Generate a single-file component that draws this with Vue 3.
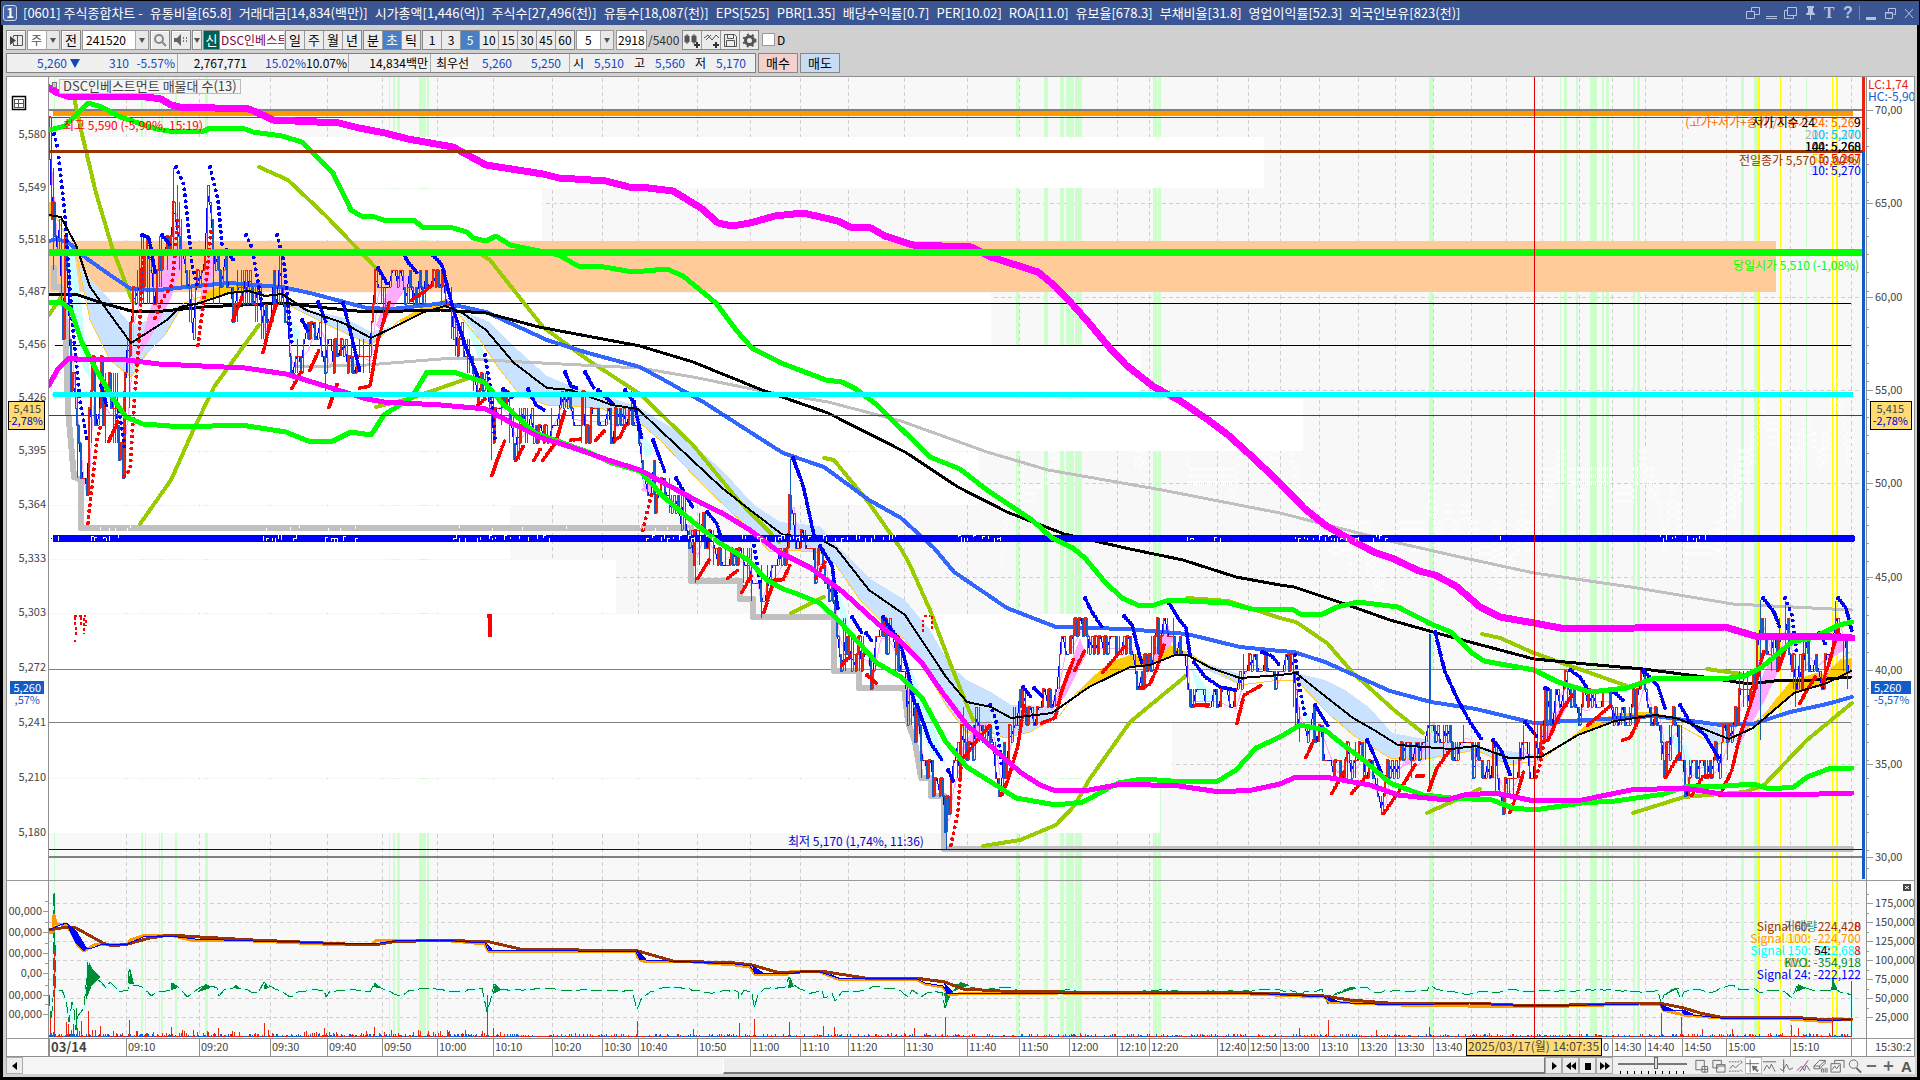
<script setup>
const parse = (s) => s.trim().split(/\s+/).map((p) => p.split(',').map(Number))

/* ---------- title bar ---------- */
const titleParts = [
  '[0601] 주식종합차트 -', '유통비율[65.8]', '거래대금[14,834(백만)]', '시가총액[1,446(억)]', '주식수[27,496(천)]',
  '유통수[18,087(천)]', 'EPS[525]', 'PBR[1.35]', '배당수익률[0.7]', 'PER[10.02]', 'ROA[11.0]', '유보율[678.3]',
  '부채비율[31.8]', '영업이익률[52.3]', '외국인보유[823(천)]',
]
const periods = ['일', '주', '월', '년']
const units = ['분', '초', '틱']
const steps = ['1', '3', '5', '10', '15', '30', '45', '60']

/* ---------- axes ---------- */
const leftLabels = [[134, '5,580'], [187, '5,549'], [239, '5,518'], [291, '5,487'], [344, '5,456'], [397, '5,426'], [450, '5,395'], [504, '5,364'], [558, '5,333'], [612, '5,303'], [667, '5,272'], [722, '5,241'], [777, '5,210'], [832, '5,180']]
const leftSub = [[911, '00,000'], [932, '00,000'], [953, '00,000'], [973, '0,00'], [995, '00,000'], [1014, '00,000']]
const rightLabels = [[110, '70,00'], [203, '65,00'], [297, '60,00'], [390, '55,00'], [483, '50,00'], [577, '45,00'], [670, '40,00'], [764, '35,00'], [857, '30,00']]
const rightSub = [[903, '175,000'], [922, '150,000'], [941, '125,000'], [960, '100,000'], [979, '75,000'], [998, '50,000'], [1017, '25,000']]
const gridRows = [203, 297, 390, 483, 577, 764, 903, 922, 941, 960, 979, 998, 1017]
const times = [[49, ''], [126, '09:10'], [199, '09:20'], [270, '09:30'], [327, '09:40'], [382, '09:50'], [437, '10:00'], [493, '10:10'], [552, '10:20'], [602, '10:30'], [638, '10:40'], [697, '10:50'], [750, '11:00'], [800, '11:10'], [848, '11:20'], [904, '11:30'], [967, '11:40'], [1019, '11:50'], [1069, '12:00'], [1117, '12:10'], [1149, '12:20'], [1217, '12:40'], [1248, '12:50'], [1280, '13:00'], [1319, '13:10'], [1358, '13:20'], [1395, '13:30'], [1433, '13:40'], [1471, ''], [1506, ''], [1542, ''], [1579, ''], [1612, '14:30'], [1645, '14:40'], [1682, '14:50'], [1726, '15:00'], [1790, '15:10'], [1851, '']]
const minorRight = Array.from({ length: 43 }, (_, i) => Math.round(110 + i * 18.05)).filter((y) => y < 876)

/* ---------- background areas ---------- */
const profile = [[137, 51, 1264], [189, 51, 542], [293, 52, 991], [346, 52, 1141], [399, 52, 1303], [452, 53, 979], [506, 53, 510], [560, 53, 616], [614, 55, 1319], [670, 52, 1760], [723, 55, 1172], [779, 54, 1160]]
const greens = [[54, 1], [141, 2], [145, 1], [159, 1], [161, 2], [175, 2], [205, 3], [389, 1], [393, 2], [397, 3], [419, 7], [427, 2], [1016, 3], [1044, 4], [1060, 4], [1066, 8], [1075, 7], [1153, 4], [1158, 3], [1429, 4], [1560, 1], [1564, 3], [1576, 2], [1590, 7], [1602, 2], [1606, 3], [1633, 2], [1637, 3], [1741, 3], [1754, 4], [1806, 1]]
const yellows = [[1758, 2], [1780, 1], [1832, 1], [1836, 2]]

/* ---------- indicator lines ---------- */
const magentaTop = '49,88 56,92 67,96 139,96 161,99 171,105 180,107 249,109 265,116 273,120 339,123 359,128 385,133 408,139 453,147 486,165 543,174 559,178 606,181 629,187 640,187 673,191 701,208 718,223 732,226 750,223 775,216 803,213 838,221 850,227 871,228 885,236 913,245 971,247 991,257 1038,272 1056,287 1073,305 1089,323 1109,347 1126,365 1154,387 1179,400 1211,422 1228,435 1248,453 1280,483 1304,508 1325,525 1353,541 1374,552 1394,559 1419,571 1435,575 1456,586 1480,607 1500,617 1534,623 1566,629 1635,628 1725,627 1755,636 1811,636 1852,638'
const greenTop = '49,130 65,126 78,113 88,103 102,107 118,116 135,122 157,129 175,132 204,131 210,128 245,129 253,132 282,136 302,142 333,173 351,210 361,216 375,217 386,221 414,220 422,227 453,228 467,232 473,238 486,241 496,236 510,245 535,250 559,255 578,266 604,267 633,272 667,269 683,276 716,303 736,330 752,348 781,363 826,380 842,382 856,389 877,405 930,457 960,469 987,490 1032,520 1052,538 1073,548 1085,558 1105,582 1122,598 1140,606 1154,605 1169,600 1228,603 1252,609 1294,610 1300,614 1323,614 1337,607 1358,602 1398,607 1431,624 1451,632 1472,653 1484,661 1534,670 1558,682 1574,687 1590,692 1627,688 1655,678 1721,679 1745,676 1762,667 1792,642 1815,637 1839,625 1852,622'
const greenLow = '49,302 61,302 71,310 82,343 98,373 114,400 126,417 143,424 184,427 241,425 286,432 308,441 333,441 351,432 371,435 384,415 412,397 427,372 453,372 484,382 502,403 535,433 588,452 612,463 640,471 648,480 664,497 681,512 718,542 748,560 767,580 783,589 795,593 820,603 840,622 877,663 901,677 922,698 946,742 967,767 991,782 1016,798 1056,805 1083,802 1118,783 1142,779 1171,781 1218,781 1236,770 1256,748 1280,737 1300,725 1325,730 1341,743 1366,762 1390,783 1423,795 1451,798 1492,800 1513,808 1534,810 1582,803 1615,801 1664,794 1688,786 1725,786 1753,784 1770,789 1794,787 1807,777 1831,768 1852,768'
const magentaLow = '49,385 58,369 69,358 86,360 118,359 159,364 245,368 286,374 367,399 384,402 441,405 486,409 506,420 539,437 571,447 608,460 640,470 701,503 722,513 750,530 779,552 811,568 844,593 877,623 901,642 922,663 942,692 967,725 995,750 1020,772 1040,785 1056,791 1089,790 1122,784 1179,786 1220,792 1252,790 1280,784 1296,777 1325,777 1370,785 1398,795 1447,800 1464,795 1496,793 1534,801 1582,800 1631,790 1684,788 1721,794 1819,794 1852,793'
const blackSlow = '49,294 78,295 102,303 135,312 163,311 204,307 282,303 327,308 367,312 441,310 486,313 539,327 640,346 693,362 762,390 828,413 905,452 958,487 1007,512 1064,534 1130,549 1183,560 1236,577 1280,585 1294,587 1345,604 1390,620 1451,637 1534,659 1586,664 1643,669 1704,677 1749,684 1774,681 1815,680 1851,677'
const blueMid = '49,241 57,239 69,243 86,258 110,275 131,289 159,290 196,286 229,283 282,287 310,293 367,308 392,309 445,303 486,312 547,340 588,353 640,367 664,380 705,403 750,432 783,453 824,467 869,500 901,518 934,548 954,572 1007,608 1056,627 1126,629 1187,634 1240,647 1280,651 1294,652 1325,662 1390,691 1431,702 1476,709 1534,723 1586,720 1655,716 1721,725 1753,724 1790,712 1827,704 1852,697'
const graySlow = '294,367 367,365 453,358 522,362 640,368 693,377 762,391 828,402 901,421 987,452 1048,470 1162,490 1280,513 1394,542 1460,557 1534,573 1631,587 1733,604 1852,610'
const blackFast = '49,215 61,217 76,245 90,287 131,343 167,320 180,307 200,303 229,293 249,291 265,296 282,294 306,310 343,323 371,338 392,328 424,312 445,306 461,312 486,330 514,363 547,388 571,390 612,405 638,409 660,430 722,488 754,513 783,535 816,537 836,548 869,590 905,615 946,677 967,702 991,707 1011,718 1052,713 1089,687 1130,667 1150,665 1175,655 1187,655 1211,668 1240,678 1280,675 1296,673 1321,693 1353,718 1374,730 1398,745 1451,749 1476,746 1509,758 1541,757 1578,735 1615,721 1655,715 1676,718 1729,739 1753,728 1794,693 1827,683 1851,671'
const support = '54,268 54,287 61,287 65,310 68,410 74,477 81,480 81,528 691,528 691,581 740,581 740,599 753,599 753,617 834,617 834,671 859,671 859,688 904,688 908,722 915,742 921,778 931,778 931,796 944,796 944,849 1851,849'
const goldLine = '55,215 66,235 78,262 90,320 110,360 131,377 147,353 165,335 184,303 229,286 265,294 290,306 330,326 371,345 400,320 445,300 461,317 480,340 500,370 520,395 547,405 600,408 640,423 660,440 705,487 750,530 770,552 790,550 824,553 836,565 860,600 880,620 905,640 920,660 946,705 967,733 990,732 1005,738 1030,732 1060,715 1076,693 1130,655 1187,652 1240,685 1280,680 1296,680 1330,715 1353,735 1390,758 1431,758 1476,750 1509,765 1541,760 1590,724 1655,712 1715,745 1729,741 1760,718 1790,690 1827,672 1852,650'
const blueBands = [
  '62,225 78,265 110,300 131,325 150,320 184,303 165,335 147,353 131,377 110,360 90,320 78,262',
  '290,298 310,310 345,318 371,332 392,326 371,345 330,326 290,306',
  '457,309 490,322 510,343 547,376 571,386 637,406 680,433 722,470 754,505 780,522 820,526 836,545 869,578 905,600 930,630 950,665 967,680 991,692 1011,705 1052,706 1060,713 1030,732 1005,738 990,732 967,733 946,705 920,660 905,640 880,620 860,600 836,565 824,553 790,550 770,552 750,530 705,487 660,440 640,423 600,408 547,405 520,395 500,370 480,340 461,317',
  '1187,655 1211,665 1240,674 1240,685 1211,672', '1296,673 1325,680 1345,690 1370,708 1392,733 1430,740 1500,750 1541,755 1509,765 1476,750 1431,758 1390,758 1353,735 1330,715 1296,680', '1680,718 1705,722 1740,740 1715,745',
]
const goldBands = ['196,303 210,290 229,284 249,287 265,294 249,291 229,293', '49,202 56,202 56,217 49,217', '400,320 424,306 445,299 456,304 445,308 420,314 400,326', '1076,694 1089,680 1110,662 1130,655 1155,660 1170,645 1187,652 1187,656 1175,656 1150,666 1130,668 1089,688', '1555,750 1590,722 1620,713 1655,712 1655,716 1615,722 1578,736', '1760,720 1775,700 1790,682 1815,673 1827,674 1840,660 1852,658 1852,673 1827,683 1794,694']
const pinkBands = ['137,360 148,315 160,280 170,255 177,245 184,262 170,300 155,330', '376,325 388,290 402,275 412,278 395,305 380,330', '200,300 208,252 216,262 208,296', '1050,712 1068,670 1080,638 1086,655 1066,695', '1148,668 1160,640 1168,625 1174,640 1158,662', '960,752 975,725 990,720 975,742', '1540,750 1550,722 1565,700 1574,694 1560,720', '1735,752 1750,705 1765,670 1782,645 1786,655 1765,700 1745,735', '1400,768 1415,750 1430,742 1418,760', '640,490 652,482 652,494', '1815,668 1832,652 1840,630 1844,650']
const cyanBands = ['62,228 74,250 82,310 86,350 92,380 84,370 72,310', '286,300 292,322 300,332 296,348', '460,312 474,330 484,352 480,362', '640,430 655,452 645,458', '835,580 848,618 852,640 842,630', '905,655 920,690 935,728 946,765 930,752 915,715', '1190,665 1210,692 1230,698 1200,702', '1300,700 1315,725 1328,742 1312,738', '1666,730 1686,745 1694,768 1680,760', '990,712 1000,738 1006,742 998,755', '1338,742 1348,756 1340,764', '1790,640 1800,668 1794,672']
const olives = ['73,93 81,130 96,193 112,247 133,303', '49,315 61,297', '140,524 171,480 192,433 214,387 259,325', '259,167 288,180 327,217 376,268', '482,255 490,260 543,327 588,360 640,394 693,445 738,500 779,542', '376,407 412,398 469,378', '824,458 834,460 869,503 901,549 909,563 930,610 950,663 973,720', '791,613 824,597', '983,846 1020,840 1056,825 1075,805 1089,780 1130,722 1187,675', '1187,598 1228,601 1280,618 1296,622 1327,643 1353,673 1394,710 1423,733', '1427,813 1480,789', '1482,634 1500,638 1534,653 1627,686', '1633,813 1684,797 1745,792 1764,785 1807,740 1852,703', '1707,669 1741,674']

/* ---------- parabolic stops ---------- */
const dash = (s) => {
  const p = parse(s)
  const a = p[0]
  const b = p[p.length - 1]
  return Math.abs((b[1] - a[1]) / (b[0] - a[0])) > 4.2 ? '0 6' : '0 3'
}
const falls = ['54,134 58,150 65,215 72,320 80,400 87,440', '101,385 107,407', '118,405 125,450', '142,235 149,238 155,272', '162,235 171,246', '176,167 184,185 187,215 192,265 197,285', '210,167 218,200 222,245', '226,250 235,262', '246,235 252,248 262,305', '277,235 284,262 292,345', '302,320 308,331', '318,302 326,322', '343,303 350,330 360,372', '378,268 388,285', '403,253 408,262 418,274', '431,253 442,265 452,305 465,345 480,382', '485,355 491,392 495,440', '503,389 513,398', '528,389 536,405 544,410', '565,372 571,386 579,389', '585,372 595,390', '598,390 614,405', '625,390 634,402 642,440', '653,440 665,472', '676,478 693,508', '707,512 717,524 723,545', '753,540 760,582', '793,458 803,485 815,540', '820,546 832,565 838,610', '852,617 862,633', '866,633 872,641', '883,617 900,642 908,672 915,705', '917,705 930,742 942,760', '948,770 954,783', '990,705 996,720 1002,768', '1023,687 1031,697', '1034,688 1043,697', '1085,598 1092,612 1102,627', '1124,616 1132,625 1142,665', '1169,603 1178,618 1186,628 1190,655', '1194,662 1205,677 1220,687 1235,690', '1262,652 1272,656 1280,666', '1295,655 1299,685 1306,720', '1315,705 1328,726', '1367,740 1374,755 1384,780', '1435,632 1445,672 1458,700 1470,722 1482,740', '1493,740 1501,750 1511,777', '1525,722 1538,738', '1545,688 1550,690', '1570,670 1580,677 1588,690', '1614,692 1625,702', '1643,670 1658,686 1665,708', '1680,705 1690,722 1705,735 1720,760', '1763,598 1774,612 1780,628', '1785,598 1792,615 1797,655', '1819,633 1826,645', '1838,598 1846,608 1852,632']
const rises = ['88,523 91,495 97,440 101,425', '109,441 118,421', '124,476 130,470 133,420 139,340 143,250', '155,318 162,300 172,285 178,220', '198,345 207,275 211,230', '233,320 243,295', '263,352 270,325 276,305', '292,388 301,372', '310,370 319,350', '329,407 338,382', '360,388 370,386 378,340 390,300', '412,300 424,292 432,285', '478,405 486,398', '492,475 498,458 505,440', '516,460 524,445', '534,460 541,448', '543,460 556,442 565,410', '571,440 581,439', '596,440 605,430', '615,440 620,437 626,424', '643,530 652,492', '698,578 709,560', '728,578 738,570', '742,592 751,576', '764,612 774,580', '775,580 783,580 790,565', '816,578 825,562', '842,665 852,654', '867,675 876,683', '951,845 958,812 961,765', '963,758 976,742 990,725', '1001,795 1008,780 1018,745 1024,705', '1042,723 1055,718 1062,690 1074,658', '1075,670 1085,650', '1103,672 1113,660 1125,646', '1141,688 1150,684 1157,668 1164,645', '1196,705 1210,705', '1237,723 1244,695 1262,685', '1306,757 1314,740', '1332,793 1345,770', '1352,793 1367,775', '1384,813 1400,790 1415,765', '1417,776 1426,776', '1429,790 1437,768 1450,750', '1510,812 1518,792 1524,770', '1536,777 1540,765 1544,740', '1548,740 1562,710 1572,695', '1588,725 1600,715 1611,705', '1623,740 1630,738 1641,715', '1666,777 1680,753', '1692,795 1703,776 1712,776', '1720,795 1732,770 1740,735 1752,700 1764,650', '1778,670 1785,650', '1800,703 1806,692 1816,676', '1822,685 1830,660 1838,630']
const strayRed = 'M74 616h4M79 616h7M75 617v8M76 627v10M75 640v2M81 617v10M84 618v16M86 620v6M923 632v-12M924 616h6M932 616v14'

/* ---------- price bars, generated from high/low envelope ---------- */
const envelope = parseEnv('49:120-215 55:200-290 60:230-310 65:240-390 70:310-405 76:380-475 82:440-529 86:450-528 88:400-475 92:350-430 100:360-440 108:380-442 115:370-440 122:400-477 128:330-440 131:295-345 136:290-310 140:235-300 146:235-300 155:268-320 160:235-285 170:235-270 173:167-250 177:185-260 182:220-300 190:268-320 198:268-350 201:235-300 205:180-245 209:185-250 213:235-300 220:250-303 228:268-303 236:268-320 243:270-300 250:268-310 258:285-325 263:310-345 270:285-325 276:245-300 282:268-300 286:300-355 290:340-390 298:338-370 305:335-358 312:310-345 320:300-355 327:320-408 335:320-360 342:335-355 350:345-380 357:340-360 368:345-372 372:290-350 376:268-300 385:285-320 392:268-300 400:265-290 408:268-300 420:268-300 432:265-285 440:270-300 448:285-320 456:310-355 465:340-360 475:355-407 485:355-390 490:390-460 497:385-420 505:390-430 515:420-460 525:410-440 535:420-442 545:425-445 555:400-425 563:370-405 570:390-440 580:390-442 590:395-440 600:408-425 615:405-440 625:390-425 636:400-440 640:440-530 646:440-500 652:460-500 658:478-512 668:478-510 675:490-525 683:495-530 690:510-545 694:528-581 702:512-545 710:530-560 718:545-578 726:546-560 735:546-565 745:545-580 755:560-600 758:580-617 765:560-600 775:560-580 785:530-570 790:460-530 793:490-545 800:528-545 810:530-560 815:548-581 822:545-565 828:580-600 833:590-617 838:610-670 845:620-670 855:635-672 865:640-672 870:660-688 878:618-650 886:620-650 895:635-672 903:650-672 907:690-723 915:700-742 922:750-778 930:760-796 940:778-796 946:796-850 950:778-796 958:740-778 962:705-760 970:740-760 976:705-745 985:720-745 992:722-745 998:760-796 1004:742-778 1010:722-742 1018:688-722 1028:705-722 1038:705-715 1047:688-715 1055:670-705 1063:635-660 1070:634-652 1078:615-640 1084:599-652 1090:635-652 1100:635-652 1115:635-652 1130:635-652 1135:670-688 1142:665-688 1150:640-670 1157:620-650 1163:605-640 1170:620-655 1178:635-655 1185:652-670 1188:688-705 1200:688-705 1215:690-705 1233:690-720 1240:670-690 1245:652-670 1255:652-670 1265:655-688 1275:670-690 1285:652-672 1292:652-690 1296:690-730 1305:722-742 1310:705-740 1320:722-742 1330:740-778 1335:760-778 1345:742-770 1350:745-796 1360:745-760 1368:742-796 1376:778-813 1382:796-813 1388:760-778 1395:760-778 1405:742-760 1415:745-778 1425:740-760 1430:700-730 1434:705-760 1440:740-760 1447:722-745 1455:740-760 1462:722-745 1468:722-750 1473:742-778 1485:760-778 1490:755-796 1495:740-800 1501:760-813 1508:780-796 1515:760-790 1521:725-760 1527:742-778 1535:740-778 1541:705-742 1546:690-740 1552:690-720 1560:670-700 1570:688-705 1577:688-722 1585:690-723 1595:690-705 1605:688-705 1615:705-722 1622:705-730 1630:700-722 1635:690-722 1641:670-695 1650:688-722 1658:705-725 1664:740-778 1672:710-745 1680:725-760 1685:760-796 1692:760-778 1700:755-770 1710:765-778 1718:742-778 1725:722-760 1733:705-740 1740:670-720 1748:670-705 1755:650-680 1760:600-640 1765:620-650 1770:640-672 1777:635-670 1783:600-645 1788:620-655 1794:670-705 1800:652-690 1807:635-670 1813:655-672 1820:670-690 1827:650-680 1833:600-640 1838:605-635 1843:635-670 1848:655-688 1853:655-690')
function parseEnv(s) {
  return s.split(' ').map((e) => {
    const [x, r] = e.split(':')
    return [Number(x), ...r.split('-').map(Number)]
  })
}
let seed = 20250314
const rnd = () => {
  seed = (seed * 1103515245 + 12345) % 2147483648
  return seed / 2147483648
}
const levels = Array.from({ length: 43 }, (_, k) => Math.round(850 - 18 * k + 0.013 * k * k))
const snap = (y) => levels.reduce((a, b) => (Math.abs(b - y) < Math.abs(a - y) ? b : a))
function at(x) {
  let i = 1
  while (i < envelope.length - 1 && envelope[i][0] < x) i++
  const [x0, h0, l0] = envelope[i - 1]
  const [x1, h1, l1] = envelope[i]
  const t = (x - x0) / (x1 - x0)
  return [h0 + (h1 - h0) * t, l0 + (l1 - l0) * t]
}
let redPath = ''
let bluePath = ''
let redThin = ''
let blueThin = ''
let ghost = ''
const mids = []
const slow = []
let prev = 160
for (let x = 49; x <= 1851; x += 2) {
  const [h, l] = at(x)
  const hi = snap(h)
  const lo = Math.max(snap(l), hi + 4)
  const close = snap(hi + (lo - hi) * rnd())
  const up = close <= prev
  const seg = rnd()
  if (Math.abs(close - prev) > 4) {
    const d = `M${x} ${prev}V${close}h2`
    if (seg > 0.45) {
      if (up) redPath += d
      else bluePath += d
    } else if (up) redThin += d
    else blueThin += d
  } else if (seg > 0.35) {
    if (up) redThin += `M${x - 1} ${close}h3`
    else blueThin += `M${x - 1} ${close}h3`
  }
  if (rnd() > 0.72) {
    if (rnd() > 0.48) redThin += `M${x} ${hi}V${lo}`
    else blueThin += `M${x} ${hi}V${lo}`
  }
  mids.push([x, (close * 2 + prev) / 3])
  slow.push([x + 3, (h + l) / 2 + 4])
  if (x > 1000) ghost += `M${x} ${hi - 222}V${Math.round(lo - 222)}`
  prev = close
}
blueThin += 'M1429 634V790M1430 634V700M790 459V530M946 800V849M1760 600V740'
const midLine = mids.map((p) => `${p[0]},${Math.round(p[1])}`).join(' ')
const slowLine = slow.map((p) => `${p[0]},${Math.round(p[1])}`).join(' ')
let specks = ''
;[[52, 60], [88, 130], [260, 300], [325, 355], [453, 550], [566, 570], [640, 720], [730, 900], [958, 1000], [1187, 1236], [1295, 1385], [1500, 1502], [1660, 1710]].forEach(([a, b]) => {
  for (let x = a; x <= b; x += 3) {
    if (rnd() > 0.5) {
      const y = 535 + Math.floor(rnd() * 4)
      specks += `M${x}.5 ${y}v${2 + Math.floor(rnd() * 4)}`
      if (rnd() > 0.6) specks += `M${x} ${y}.5h3`
    }
    if (x < 700 && rnd() > 0.7) specks += `M${x}.5 ${525 + Math.floor(rnd() * 4)}v3`
  }
})

/* ---------- lower panel ---------- */
const signalBrown = '49,930 55,929 67,927 76,928 103,943 112,946 128,944 150,938 170,935 200,937 253,940 300,942 345,944 380,944 392,942 440,940 490,942 520,949 638,951 673,961 735,963 752,965 780,973 820,971 865,978 915,978 945,982 963,989 1000,991 1060,992 1250,993 1280,994 1324,996 1350,1000 1400,1004 1470,1003 1534,1006 1640,1003 1664,1004 1684,1008 1700,1013 1720,1017 1790,1017 1830,1020 1852,1019'
const signalBlue = '49,930 60,925 67,923 71,932 76,938 84,949 92,948 103,944 128,944 145,936 170,936 195,939 253,941 300,942 345,944 380,943 395,941 440,940 485,943 488,950 520,950 636,952 639,958 646,960 735,964 750,966 755,973 790,974 805,971 820,972 838,978 915,978 925,983 943,986 948,993 1060,993 1250,993 1324,997 1330,1001 1350,1003 1400,1005 1470,1003 1534,1006 1640,1004 1660,1004 1663,1010 1682,1011 1684,1014 1720,1018 1790,1018 1830,1021 1852,1019'
const signalOrange = '49,932 53,932 54,915 56,924 65,924 70,930 77,944 84,951 94,945 128,944 130,940 145,935 170,935 190,940 253,941 345,945 373,944 375,941 440,940 485,944 488,951 520,951 636,952 638,958 642,961 693,962 735,965 750,967 755,975 788,974 790,971 820,972 838,979 915,979 925,984 943,987 948,994 958,994 1060,993 1250,994 1324,997 1330,1002 1400,1005 1534,1007 1640,1004 1660,1004 1663,1010 1684,1015 1720,1018 1790,1019 1832,1022 1834,1018 1852,1020'
const blueFills = ['67,923 76,930 87,948 84,952 76,944 70,932', '486,943 492,949 490,952', '637,950 646,959 639,960', '752,965 764,973 754,974', '944,982 953,992 946,994', '828,973 840,978 836,978', '1327,996 1338,1001 1330,1002', '1661,1004 1674,1010 1662,1010', '1682,1009 1694,1014 1684,1015']
const kvoKeys = '49,995 51,1022 53,1000 54,893 56,990 62,990 66,1000 69,1022 72,1002 74,1010 76,1030 78,1016 84,1008 88,962 92,970 98,980 106,988 110,982 120,992 128,990 129,968 133,985 142,987 151,996 160,991 170,990 172,983 178,987 187,997 195,991 206,985 217,988 219,996 224,990 236,987 258,993 264,982 272,987 290,997 300,991 324,990 326,997 330,991 350,989 370,992 375,983 385,990 400,996 410,990 430,988 460,992 482,988 487,1012 492,995 494,984 500,990 540,989 580,990 620,991 632,990 637,1010 642,997 650,992 665,987 690,989 710,993 725,990 738,992 739,999 744,990 752,992 754,1008 758,995 764,989 785,987 789,977 794,985 810,994 822,990 824,998 832,993 835,1001 842,992 860,991 875,986 900,990 908,997 912,990 921,997 930,992 942,992 945,1008 950,996 957,984 965,986 980,990 1005,987 1020,991 1050,991 1070,989 1084,993 1110,991 1130,994 1150,990 1200,991 1240,991 1262,989 1280,990 1296,992 1299,999 1305,991 1322,989 1328,1004 1334,995 1345,989 1365,987 1376,993 1386,990 1400,991 1427,991 1430,985 1440,990 1470,994 1486,991 1500,992 1508,989 1520,991 1570,991 1600,989 1640,992 1658,990 1661,1004 1664,995 1676,988 1681,999 1684,992 1692,989 1710,992 1733,985 1740,990 1754,988 1760,993 1775,990 1785,992 1792,998 1797,986 1806,988 1820,991 1832,990 1833,978 1837,990 1851,995 1851,1036'
let kvoLine = ''
{
  const k = parse(kvoKeys)
  for (let i = 0; i < k.length; i++) {
    kvoLine += `${k[i][0]},${k[i][1]} `
    if (k[i + 1] && k[i + 1][0] - k[i][0] > 7) {
      for (let x = k[i][0] + 3; x < k[i + 1][0] - 2; x += 3) {
        const t = (x - k[i][0]) / (k[i + 1][0] - k[i][0])
        kvoLine += `${x},${Math.round(k[i][1] + (k[i + 1][1] - k[i][1]) * t + rnd() * 2 - 1)} `
      }
    }
  }
}
const kvoFills = ['86,1000 87,975 89,962 93,970 101,977 92,985', '129,984 130,968 134,984', '171,990 172,983 177,988', '264,989 265,982 269,988', '373,987 375,982 379,988', '493,994 495,984 501,990', '788,988 790,977 794,987', '944,993 946,1006 951,992', '952,992 960,982 970,985', '1335,995 1350,987 1358,988 1344,992', '1796,992 1798,984 1806,988', '1831,990 1833,978 1837,990', '1664,995 1672,989 1680,988', '198,992 206,983 210,988', '232,988 236,985 240,989']
let volRed = ''
let volBlue = ''
for (let x = 49; x < 1852; x += 1) {
  const r = rnd()
  const cap = x < 110 ? 9 : x < 520 ? 4 : 2
  const h = 1 + Math.floor(r * r * r * cap * 1.6)
  if (rnd() > 0.5) volRed += `M${x}.5 1037v-${h}`
  else volBlue += `M${x}.5 1037v-${Math.min(h, 3)}`
}
;[[50, 20], [54, 86], [66, 15], [68, 13], [81, 16], [88, 26], [129, 17], [171, 10], [218, 9], [264, 14], [324, 9], [374, 10], [487, 25], [493, 9], [637, 16], [693, 8], [739, 14], [754, 18], [789, 15], [823, 11], [834, 10], [914, 9], [945, 20], [1299, 9], [1328, 17], [1376, 7], [1429, 10], [1661, 24], [1681, 20], [1702, 8], [1732, 8], [1791, 12], [1798, 9], [1832, 20], [1851, 56]].forEach(([x, h]) => {
  volRed += `M${x}.5 1037v-${h}`
})
</script>

<template>
  <div class="window">
    <header class="titlebar">
      <span class="badge">1</span>
      <h1 class="title"><span v-for="t in titleParts" :key="t">{{ t }}</span></h1>
      <nav class="win-icons" aria-label="창 제어">
        <button aria-label="창 분리"><svg width="16" height="14"><path d="M1.500 5.500h8v7h-8zM6.500 5.500v-4h8v7h-5" /></svg></button>
        <button aria-label="접기"><svg width="16" height="14"><path d="M2 10.500h11M2 12.500h11" /></svg></button>
        <button aria-label="복사"><svg width="16" height="14"><path d="M4.500 1.500h9v8h-9zM4.500 4.500h-3v8h9v-3" /></svg></button>
        <button aria-label="고정"><svg width="16" height="14"><path class="solid" d="M5 0h7v2h-1v4l2 2v1H9v5H8V9H4V8l2-2V2H5z" /></svg></button>
        <button aria-label="글꼴"><span class="glyph serif">T</span></button>
        <button aria-label="도움말"><span class="glyph">?</span></button>
        <i class="bar"></i>
        <button aria-label="최소화"><svg width="16" height="14"><path class="solid" d="M3 11h10v3H3z" /></svg></button>
        <button aria-label="이전 크기"><svg width="16" height="14"><path d="M3.500 6.500h7v6h-7zM3 7h8M6.500 5.500v-3h7v6h-2" /></svg></button>
        <button aria-label="닫기"><svg width="16" height="14"><path d="M4 3l8 9M12 3l-8 9" /></svg></button>
      </nav>
    </header>

    <main class="content">
      <form class="toolbar" @submit.prevent>
        <button class="tb" aria-label="메뉴"><svg width="17" height="16"><path d="M5.500 3.500h9v10h-9M9.500 3.500v10M5.500 3.500v2M5.500 11v3" class="ln" /><path d="M2 4l6 4.500L2 13z" fill="#444" /></svg></button>
        <span class="combo w32"><select aria-label="종류"><option>주</option></select><i class="arrow"></i></span>
        <button class="tb">전</button>
        <span class="combo w65"><input value="241520" aria-label="종목코드"><i class="arrow"></i></span>
        <button class="tb" aria-label="검색"><svg width="16" height="16"><circle cx="7" cy="7" r="4" class="lg" /><path d="M10 10l4 4" class="lg2" /></svg></button>
        <button class="tb" aria-label="소리"><svg width="16" height="16"><path d="M1 6h3l4-4v12l-4-4H1z" fill="#666" /><path d="M10.500 5v6M13.500 5v6" stroke="#777" stroke-dasharray="2 1" /></svg></button>
        <button class="tb w10" aria-label="소리 설정"><i class="tri"></i></button>
        <strong class="new">신</strong><span class="name">DSC인베스트</span>
        <span class="group"><button v-for="p in periods" :key="p">{{ p }}</button></span>
        <span class="group"><button v-for="u in units" :key="u" :class="{ on: u === '초' }">{{ u }}</button></span>
        <span class="group num"><button v-for="s in steps" :key="s" :class="{ on: s === '5' }">{{ s }}</button></span>
        <span class="combo w38"><select aria-label="간격"><option>5</option></select><i class="arrow"></i></span>
        <input class="count" value="2918" aria-label="봉 개수"><span class="total">/5400</span>
        <span class="group">
          <button aria-label="차트 추가"><svg width="17" height="17"><path d="M1 4h4v6H1zM8 4h4v6H8zM3 2v10M10 2v10" fill="#555" stroke="#555" /><path d="M10 13h6M13 10v6" stroke="#333" stroke-width="2" /></svg></button>
          <button aria-label="지표 추가"><svg width="17" height="17"><path d="M1 6l4-3 4 5 4-5 3 3M3 8l5-5" class="ln" /><path d="M10 13h6M13 10v6" stroke="#333" stroke-width="2" /></svg></button>
          <button aria-label="저장"><svg width="17" height="17"><path d="M2.500 2.500h10l2 2v10h-12zM5.500 2.500v4h6v-4M4.500 14.500v-6h8v6" class="ln" /></svg></button>
          <button aria-label="설정"><svg width="17" height="17"><circle cx="8.500" cy="8.500" r="4" fill="none" stroke="#555" stroke-width="3" /><circle cx="8.500" cy="8.500" r="6" fill="none" stroke="#555" stroke-width="2" stroke-dasharray="2 3" /></svg></button>
        </span>
        <label class="check"><input type="checkbox">D</label>
      </form>

      <div class="quote-row">
        <div class="quote">
          <span class="q c1">5,260</span><i class="down"></i><span class="q c2">310</span><span class="q c3">-5.57%</span>
          <span class="q c4 k">2,767,771</span><span class="q c5">15.02%</span><span class="q c6 k">10.07%</span>
          <span class="q c7 k">14,834백만</span><span class="q c8 k">최우선</span><span class="q c9">5,260</span><span class="q c10">5,250</span>
          <span class="q c11 k">시</span><span class="q c12">5,510</span><span class="q c13 k">고</span><span class="q c12">5,560</span><span class="q c13 k">저</span><span class="q c12">5,170</span>
        </div>
        <button class="buy">매수</button><button class="sell">매도</button>
      </div>

      <section class="chart">
        <div class="axis left">
          <svg viewBox="7 77 41 979" preserveAspectRatio="none">
            <g fill="none" stroke="#000"><rect x="12.500" y="96.500" width="13" height="13" stroke-width="1.500" /><path d="M14 99.500h10M14 103.500h10M14 107.500h10M14.500 99v9M18.500 99v9M23.500 99v9" stroke="#555" /></g>
            <text v-for="l in leftLabels" :key="l[0]" x="46" :y="l[0] + 4" class="end">{{ l[1] }}</text>
            <text v-for="l in leftSub" :key="l[0]" x="42" :y="l[0] + 4" class="end">{{ l[1] }}</text>
            <path v-for="l in leftSub" :key="'t' + l[0]" :d="`M43 ${l[0]}.500h5M45 ${l[0] - 10}.500h3`" stroke="#999" />
            <path d="M7 880.500h41M7 1038.500h41" stroke="#999" />
            <rect x="8.500" y="401.500" width="36" height="28" fill="#ffdc73" stroke="#000" />
            <text x="41" y="413" class="end">5,415</text><text x="43" y="425" class="end navy">-2,78%</text>
            <rect x="10" y="681" width="34" height="13" fill="#135bc8" />
            <text x="41" y="692" class="end" fill="#fff">5,260</text><text x="40" y="704" class="end blue">,57%</text>
          </svg>
        </div>

        <div class="plot">
          <svg viewBox="49 77 1817 979" preserveAspectRatio="none">
            <g shape-rendering="crispEdges">
              <rect x="49" y="77" width="1817" height="961" fill="#f8f8f8" />
              <path v-for="t in times.slice(1)" :key="t[0]" :d="`M${t[0]}.500 78V1038`" class="grid" />
              <path v-for="y in gridRows" :key="y" :d="`M49 ${y}.500H1862`" class="grid" />
              <rect v-for="g in greens" :key="g[0]" :x="g[0]" y="77" :width="g[1]" height="961" fill="#ccffcc" />
              <rect v-for="g in yellows" :key="g[0]" :x="g[0]" y="77" :width="g[1]" height="961" fill="#ffff00" />
              <rect v-for="p in profile" :key="p[0]" x="49" :y="p[0]" :width="p[2] - 49" :height="p[1]" fill="#fff" />
              <rect x="49" y="241" width="1727" height="51" fill="#ffcc99" />
              <path :d="ghost" stroke="#fff" stroke-dasharray="4 3" />
              <g class="fills">
                <polygon v-for="b in blueBands" :key="b" :points="b" fill="#c8e2ff" />
                <polygon v-for="b in cyanBands" :key="b" :points="b" fill="#ccffff" />
                <polygon v-for="b in pinkBands" :key="b" :points="b" fill="#ffaaff" />
                <polygon v-for="b in goldBands" :key="b" :points="b" fill="#ffcc00" />
              </g>
              <path d="M49 110H1862" stroke="#808080" stroke-width="2" />
              <path d="M53 113.500H1853" stroke="#ff9900" stroke-width="5" />
              <path d="M49 117.500H1862" stroke="#f00" />
              <path d="M55 303.500H1851M55 345.500H1851" stroke="#000" />
              <path d="M49 669.500H1851M49 722.500H1851" stroke="#808080" />
              <g class="lines">
                <polyline :points="support" stroke="#c0c0c0" stroke-width="6" />
                <polyline v-for="o in olives" :key="o" :points="o" stroke="#99cc00" stroke-width="4" />
                <polyline :points="goldLine" stroke="#ffcc33" />
                <polyline :points="slowLine" stroke="#ffaaff" />
                <polyline :points="graySlow" stroke="#c0c0c0" stroke-width="3" />
                <polyline :points="blueMid" stroke="#3366ff" stroke-width="4" />
                <polyline :points="blackSlow" stroke="#000" stroke-width="3" />
                <polyline :points="midLine" stroke="#0000ff" />
              </g>
              <path :d="bluePath" class="b2" /><path :d="redPath" class="r2" />
              <path :d="blueThin" class="b1" /><path :d="redThin" class="r1" />
              <g class="lines">
                <polyline v-for="s in falls" :key="s" :points="s" stroke="#0000ff" stroke-width="4" :stroke-dasharray="dash(s)" />
                <polyline v-for="s in rises" :key="s" :points="s" stroke="#ff0000" stroke-width="4" :stroke-dasharray="dash(s)" />
                <polyline :points="blackFast" stroke="#000" stroke-width="2" />
                <path d="M55 538.500H1852" stroke="#0000ff" stroke-width="7" />
                <polyline :points="greenTop" stroke="#00ff00" stroke-width="5" />
                <polyline :points="greenLow" stroke="#00ff00" stroke-width="5" />
                <polyline :points="magentaLow" stroke="#ff00ff" stroke-width="5" />
                <polyline :points="magentaTop" stroke="#ff00ff" stroke-width="7" />
              </g>
              <path :d="specks" stroke="#fff" fill="none" />
              <path :d="strayRed" stroke="#f00" stroke-width="2" stroke-dasharray="3 2" />
              <path d="M487 616h5M489.500 617v20" stroke="#f00" stroke-width="4" />
              <path d="M49 151.500H1862" stroke="#993300" stroke-width="3" />
              <path d="M49 252.500H1862" stroke="#00ff00" stroke-width="7" />
              <path d="M55 394.500H1851" stroke="#00ffff" stroke-width="5" stroke-linecap="round" />
              <path d="M49 849.500H1862" stroke="#0000cc" /><path d="M49 857H1862" stroke="#808080" stroke-width="2" />
              <path d="M1863.500 77V151" stroke="#e8240f" stroke-width="3" /><path d="M1863.500 151V879" stroke="#135bc8" stroke-width="3" />
              <g class="lines">
                <polyline :points="kvoLine" stroke="#ccffff" stroke-width="3" />
                <polyline :points="kvoLine" stroke="#008c32" stroke-dasharray="11 5" />
                <path d="M54.500 893V990M1851.500 995V1036M76.500 1030V1008M487.500 1012V995" stroke="#008c32" />
                <polygon v-for="f in kvoFills" :key="f" :points="f" class="kvo" />
                <polyline :points="signalOrange" stroke="#ff9900" stroke-width="3" />
                <polyline :points="signalBrown" stroke="#993300" stroke-width="3" />
                <polyline :points="signalBlue" stroke="#0000ff" />
                <polygon v-for="f in blueFills" :key="f" :points="f" class="bf" />
              </g>
              <path :d="volRed" stroke="#e8240f" /><path :d="volBlue" stroke="#135bc8" />
              <path d="M49 880.500H1866" stroke="#999" />
              <path d="M49 415.500H1862M1534.500 77V1038" stroke="#e00000" />
              <rect x="49" y="1038" width="1817" height="18" fill="#fff" /><path d="M49 1038.500H1866" stroke="#909090" />
              <path v-for="t in times" :key="'a' + t[0]" :d="`M${t[0]}.500 1038V1056`" stroke="#909090" />
              <rect x="59" y="79" width="181" height="14" fill="#f4f4f4" stroke="#bbb" /><rect x="52.500" y="82.500" width="4" height="5" fill="#ccc" stroke="#777" />
            </g>
            <g class="dk">
              <text x="63" y="91" class="head">DSC인베스트먼트 매물대 수(13)</text>
              <text x="51" y="1052" class="day">03/14</text>
              <text v-for="t in times" :key="t[0]" :x="t[0] + 2" y="1051" class="small">{{ t[1] }}</text>
              <text x="1603" y="1051" class="small">0</text>
            </g>
            <text x="63" y="130" fill="#f00">최고 5,590 (-5,90%, 15:19)</text>
            <text x="788" y="846" fill="#0000cc">최저 5,170 (1,74%, 11:36)</text>
            <text x="1733" y="270" fill="#00ff00">당일시가 5,510 (-1,08%)</text>
            <text x="1861" y="127" class="end" fill="#ff6600">(고가+저가+종가)/3 종가 24: 5,269</text>
            <text x="1752" y="127">저가 지수 24</text><text x="1854" y="127">9</text>
            <text x="1861" y="139" class="end" fill="#b0b0b0">200: 5,300</text><text x="1861" y="139" class="end" fill="#00ccff">10: 5,270</text>
            <text x="1861" y="151" class="end">144: 5,260</text><text x="1861" y="151" class="end">100: 5,268</text>
            <text x="1861" y="163" class="end" fill="#ffcc00">54: 5,260</text><text x="1861" y="163" class="end" fill="#f00">5: 5,267</text>
            <text x="1739" y="165" fill="#993300">전일종가 5,570 (0,00%)</text>
            <text x="1808" y="175" fill="#c8e2ff">30:</text><text x="1861" y="175" class="end" fill="#0000ff">10: 5,270</text>
            <text x="1784" y="931" fill="#339999">거래량</text><text x="1861" y="931" class="end" fill="#f00">8</text><text x="1861" y="931" class="end" fill="#993300">Signal 60: -224,420</text>
            <text x="1786" y="943" fill="#ffff00">60: 3</text><text x="1861" y="943" class="end" fill="#ff9900">Signal 100: -224,700</text>
            <text x="1861" y="955" class="end" fill="#00ffff">Signal 150: -222,681</text><text x="1814" y="955">54:</text><text x="1861" y="955" class="end" fill="#f00">8</text>
            <text x="1784" y="967" fill="#ff9900">60: 1</text><text x="1861" y="967" class="end" fill="#008c32">KVO: -354,918</text>
            <text x="1861" y="979" class="end" fill="#0000ff">Signal 24: -222,122</text>
            <rect x="1466.500" y="1038.500" width="135" height="17" fill="#ffdc73" stroke="#000" /><text x="1468" y="1051" fill="#444">2025/03/17(월) 14:07:35</text>
          </svg>
        </div>

        <div class="axis right">
          <svg viewBox="1867 77 47 979" preserveAspectRatio="none">
            <path v-for="y in minorRight" :key="y" :d="`M1867 ${y}.500h2`" stroke="#999" />
            <path v-for="l in [...rightLabels, ...rightSub]" :key="'r' + l[0]" :d="`M1867 ${l[0]}.500h6`" stroke="#999" />
            <path v-for="l in rightSub" :key="'m' + l[0]" :d="`M1867 ${l[0] - 9}.500h2`" stroke="#999" />
            <path d="M1867 880.500h47M1867 1038.500h47" stroke="#999" />
            <text x="1868" y="89" class="wide" fill="#e8240f">LC:1,74</text><text x="1868" y="101" class="wide" fill="#135bc8">HC:-5,90</text>
            <text v-for="l in [...rightLabels, ...rightSub]" :key="l[0]" x="1875" :y="l[0] + 4">{{ l[1] }}</text>
            <rect x="1870.500" y="401.500" width="41" height="28" fill="#ffdc73" stroke="#000" /><text x="1904" y="413" class="end">5,415</text><text x="1908" y="425" class="end navy">-2,78%</text>
            <rect x="1871" y="681" width="40" height="13" fill="#135bc8" /><text x="1874" y="692" fill="#fff">5,260</text><text x="1874" y="704" class="blue">-5,57%</text>
            <rect x="1903" y="884" width="8" height="7" fill="#444" /><path d="M1905 886l4 3M1909 886l-4 3" stroke="#fff" />
            <text x="1875" y="1051">15:30:2</text>
          </svg>
        </div>
      </section>

      <footer class="bottom">
        <button class="sb" aria-label="왼쪽"><svg width="10" height="10"><path d="M7 1v8L2 5z" /></svg></button>
        <div class="track"><div class="thumb"></div></div>
        <button class="sb" aria-label="오른쪽"><svg width="10" height="10"><path d="M3 1v8l5-4z" /></svg></button>
        <button class="sb" aria-label="되감기"><svg width="10" height="10"><path d="M5 1v8L0 5zM10 1v8L5 5z" /></svg></button>
        <button class="sb" aria-label="정지"><svg width="10" height="10"><path d="M2 2h6v7H2z" /></svg></button>
        <button class="sb" aria-label="빨리 감기"><svg width="10" height="10"><path d="M0 1v8l5-4zM5 1v8l5-4z" /></svg></button>
        <label class="slide"><input type="range" value="56" aria-label="확대 비율"></label>
        <div class="tools">
          <button aria-label="창 추가"><svg viewBox="0 0 16 16"><path d="M8 12H2V2h9v6M8.500 8.500h6v6h-6zM8 11.500h7M11.500 8v7" /></svg></button>
          <button aria-label="창 겹치기"><svg viewBox="0 0 16 16"><path d="M8 10H2V2h9v4M6 6.500h9v8H6zM6 8h9" /></svg></button>
          <button aria-label="범위"><svg viewBox="0 0 16 16"><path d="M1 3.500h11M1 13.500h11" stroke-dasharray="2 1" /><path d="M2 11l3-4 3 3 4-4M13 2l2 2-2 2M13 12l2 2" /></svg></button>
          <button class="on" aria-label="십자선"><svg viewBox="0 0 16 16"><path d="M1 5.500h14M5.500 1v14" /><path d="M8 8l5 1-2 1 3 3-1 1-3-3-1 2z" fill="#666" /></svg></button>
          <button aria-label="추세선"><svg viewBox="0 0 16 16"><path d="M1 3.500h14M2 13l3-6 3 4 2-5 4 8" /></svg></button>
          <button aria-label="수직선"><svg viewBox="0 0 16 16"><path d="M5 1v14" stroke="#939" /><path d="M1 11l3 2 4-7 3 6 4-2" /></svg></button>
          <button aria-label="사선"><svg viewBox="0 0 16 16"><path d="M4 14L13 2" stroke="#939" /><path d="M1 13l5-5 3 5 2-6 4 6" /></svg></button>
          <button aria-label="모두 지우기"><svg viewBox="0 0 16 16"><path d="M1 8l6-6h6l-6 6zM1 8v3h6V8M7 11l6-6V2M9 15v-4h2v4M13 10v5M15 10v5" /></svg></button>
          <button aria-label="차트 겹침"><svg viewBox="0 0 16 16"><path d="M5 2h10v8M1 5.500h10v9H1zM2 12l3-4 2 3 3-4M5 5V2" /></svg></button>
          <button aria-label="돋보기"><svg viewBox="0 0 16 16"><circle cx="7" cy="6" r="4.500" /><path d="M10 10l5 5" stroke-width="2" /></svg></button>
          <button aria-label="축소"><svg viewBox="0 0 16 16"><path d="M3 8h10" stroke-width="2" /></svg></button>
          <button aria-label="확대"><svg viewBox="0 0 16 16"><path d="M3 8h10M8 3v10" stroke-width="2" /></svg></button>
          <button aria-label="자동"><b>A</b></button>
        </div>
      </footer>
    </main>
  </div>
</template>

<style>
body { background: #000; overflow: hidden; }
</style>

<style scoped>
* { box-sizing: border-box; }
.window { height: 100vh; min-width: 1200px; display: flex; flex-direction: column; padding: 1px 0 3px; background: #000; font: 13px/20px "Noto Sans CJK KR", sans-serif; color: #000; }
button, input, select { font: inherit; color: inherit; margin: 0; padding: 0; border: 0; border-radius: 0; appearance: none; background: none; }
.titlebar { height: 24px; margin: 0 1px; padding: 0 2px; display: flex; align-items: center; background: #3a5592; color: #fff; }
.badge { width: 14px; height: 16px; border: 1px solid #cdd8f0; border-radius: 3px; font-weight: bold; line-height: 14px; text-align: center; background: #4a66a5; }
.title { margin: 0 0 0 6px; display: flex; gap: 7px; flex: 1; font: inherit; white-space: nowrap; }
.win-icons { display: flex; align-items: center; gap: 3px; color: #b4c3e4; }
.win-icons button { width: 16px; height: 16px; display: flex; align-items: center; justify-content: center; }
.win-icons path { fill: none; stroke: #b4c3e4; stroke-width: 1; }
.win-icons .solid { fill: #b4c3e4; stroke: none; }
.glyph { font: bold 16px/16px "Liberation Sans", sans-serif; }
.serif { font-family: "Liberation Serif", serif; }
.bar { width: 1px; height: 14px; background: #7187b8; }
.content { flex: 1; min-height: 0; display: flex; flex-direction: column; margin: 0 3px; padding: 0 2px 3px 3px; background: #d0d0d0; }
.toolbar { height: 28px; padding-top: 5px; display: flex; align-items: flex-start; gap: 1px; }
.tb { width: 20px; height: 20px; border: 1px solid #888; background: #ececec; display: flex; align-items: center; justify-content: center; box-shadow: inset 1px 1px #fff; }
.ln { fill: none; stroke: #555; }
.lg { fill: none; stroke: #888; stroke-width: 2; }
.lg2 { stroke: #888; stroke-width: 2; }
.w10 { width: 10px; }
.combo { display: flex; height: 20px; border: 1px solid #999; background: #fff; font-size: 12px; line-height: 18px; }
.combo input, .combo select { flex: 1; min-width: 0; padding-left: 3px; }
.w32 { width: 33px; color: #555; }
.w65 { width: 67px; }
.w38 { width: 38px; }
.w38 select { padding-left: 8px; }
.arrow { width: 13px; background: #e8e8e8; border-left: 1px solid #aaa; position: relative; }
.arrow::after, .tri::after { content: ""; position: absolute; left: 3px; top: 7px; border: 3px solid transparent; border-top: 5px solid #555; }
.tri { position: relative; width: 8px; height: 18px; }
.tri::after { left: 1px; }
.new { width: 17px; height: 20px; border: 1px solid #888; background: #006058; color: #fff; font-weight: normal; text-align: center; line-height: 18px; }
.name { width: 64px; height: 20px; margin-left: -1px; padding-left: 1px; background: #fff; color: #800040; overflow: hidden; white-space: nowrap; font-size: 12px; line-height: 18px; border-top: 1px solid #999; border-bottom: 1px solid #999; }
.group { display: flex; height: 20px; border: 1px solid #888; }
.group button { width: 19px; background: #ececec; border-right: 1px solid #999; display: flex; align-items: center; justify-content: center; }
.group button:last-child { border-right: 0; width: 18px; }
.group .on { background: #4780c4; color: #fff; }
.num { font-size: 12px; }
.count { width: 31px; height: 20px; border: 1px solid #999; padding-left: 1px; background: #fff; margin-left: 1px; font-size: 12px; }
.total { color: #333; width: 33px; line-height: 20px; font-size: 12px; }
.check { display: flex; align-items: center; gap: 2px; height: 19px; margin-left: 2px; font-size: 12px; }
.check input { width: 13px; height: 13px; background: #fff; border: 1px solid #999; }
.quote-row { height: 23px; display: flex; align-items: flex-start; }
.quote { width: 750px; height: 20px; display: flex; align-items: center; border: 1px solid #808080; background: #f0f0f0; color: #1048c0; white-space: nowrap; font-size: 12px; }
.q { text-align: right; line-height: 18px; }
.k { color: #000; }
.down { margin-left: 3px; border: 5px solid transparent; border-top: 9px solid #1048c0; border-bottom: 0; }
.c1 { width: 60px; } .c2 { width: 49px; } .c3 { width: 49px; border-right: 1px solid #aaa; padding-right: 2px; }
.c4 { width: 69px; } .c5 { width: 59px; } .c6 { width: 43px; border-right: 1px solid #aaa; padding-right: 2px; }
.c7 { width: 82px; border-right: 1px solid #aaa; padding-right: 2px; } .c8 { width: 38px; } .c9 { width: 43px; } .c10 { width: 58px; border-right: 1px solid #aaa; padding-right: 8px; }
.c11 { width: 14px; } .c12 { width: 40px; } .c13 { width: 21px; }
.buy, .sell { width: 40px; height: 20px; margin-left: 2px; border: 1px solid #888; background: #f6d0cc; text-align: center; line-height: 18px; }
.sell { background: #c8dcf4; }
.chart { flex: 1; min-height: 0; display: grid; grid-template-columns: 42px minmax(0, 1fr) 48px; border: 1px solid #909090; background: #fff; }
.axis, .plot { min-width: 0; min-height: 0; overflow: hidden; }
.left { border-right: 1px solid #909090; }
.right { border-left: 1px solid #909090; }
.chart svg { display: block; width: 100%; height: 100%; overflow: hidden; font-size: 12px; }
.axis text { fill: #444; font-size: 11px; }
.axis .wide { font-size: 12px; }
.axis text[fill="#fff"] { fill: #fff; }
.axis text[fill="#e8240f"] { fill: #e8240f; }
.axis text[fill="#135bc8"], .axis .blue { fill: #135bc8; }
.axis .navy { fill: #0000cc; }
.end { text-anchor: end; }
.dk text { fill: #444; }
.dk .head { font-size: 13px; }
.dk .small { font-size: 11px; }
.dk .day { font-weight: bold; font-size: 13px; }
.grid { stroke: #d0d0d0; stroke-dasharray: 4 3; }
.lines polyline, .lines path { fill: none; stroke-linejoin: round; stroke-linecap: round; }
.lines .kvo { fill: #008c32; }
.lines .bf { fill: #0000ff; }
.b2, .r2, .b1, .r1 { fill: none; stroke: #135bc8; stroke-width: 1; }
.r1, .r2 { stroke: #e8240f; }
.b2, .r2 { stroke-width: 2; }
.bottom { height: 17px; display: flex; background: #f0f0f0; }
.sb { width: 17px; height: 17px; border: 1px solid #777; border-top-color: #fff; border-left-color: #fff; background: #ececec; display: flex; align-items: center; justify-content: center; outline: 1px solid #aaa; outline-offset: -1px; }
.track { flex: 1; display: flex; justify-content: flex-end; background: #f6f6f6; }
.thumb { width: 54%; height: 17px; background: #eee; border: 1px solid #fff; border-right-color: #777; border-bottom: 2px solid #777; }
.slide { width: 79px; padding: 0 5px; background: repeating-linear-gradient(90deg, #000 0 1px, transparent 1px 7px) 7px 14px / 68px 3px no-repeat; }
.slide input { width: 69px; height: 12px; display: block; background: linear-gradient(#777, #777) 0 6px / 100% 2px no-repeat; }
.slide input::-webkit-slider-thumb { appearance: none; width: 4px; height: 12px; background: #ddd; border: 1px solid #666; }
.tools { display: flex; width: 223px; padding-left: 2px; }
.tools button { width: 17px; height: 17px; }
.tools .on { background: #fff; outline: 1px solid #bbb; outline-offset: -1px; }
.tools svg { display: block; width: 15px; height: 16px; fill: none; stroke: #666; }
.tools b { font: bold 15px/17px "Liberation Sans", sans-serif; color: #555; }
</style>
